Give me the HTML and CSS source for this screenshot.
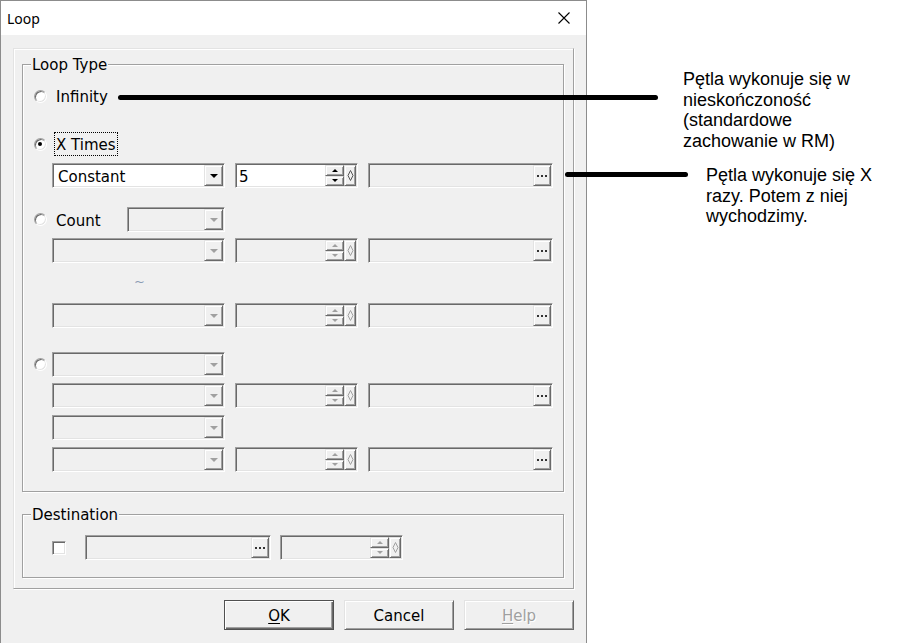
FILE: index.html
```html
<!DOCTYPE html>
<html lang="pl">
<head>
    <meta charset="UTF-8">
    <meta name="viewport" content="width=device-width, initial-scale=1.0">
    <title>Loop</title>
    <link rel="stylesheet" href="styles.css">
</head>
<body>
    <div class="screen">
        <div class="dialog">
            <div class="titlebar">
                <span class="title">Loop</span>
                <svg class="close" width="12" height="12" viewBox="0 0 12 12">
                    <path d="M0.5 0.5 L11.5 11.5 M11.5 0.5 L0.5 11.5" stroke="#000" stroke-width="1.1" fill="none"/>
                </svg>
            </div>

            <div class="client">
                <div class="page">
                    <!-- Loop Type -->
                    <div class="group group-loop">
                        <span class="group-title">Loop Type</span>

                        <div class="opt opt-infinity">
                            <span class="radio"></span>
                            <span class="label">Infinity</span>
                        </div>

                        <div class="opt opt-times">
                            <span class="radio checked"></span>
                            <span class="label focus">X Times</span>
                        </div>

                        <div class="row row-times">
                            <div class="field combo on">
                                <span class="text">Constant</span>
                                <span class="raised drop"><i class="arrow-down"></i></span>
                            </div>
                            <div class="field spin on">
                                <span class="text text-num">5</span>
                                <span class="spin-btns">
                                    <span class="raised"><i class="arrow-up"></i></span>
                                    <span class="raised"><i class="arrow-down small"></i></span>
                                </span>
                                <span class="raised lock">
                                    <svg width="7" height="11" viewBox="0 0 7 11"><polygon points="3.5,0.5 6,5.5 3.5,10.5 1,5.5" fill="none" stroke="#555" stroke-width="1"/></svg>
                                </span>
                            </div>
                            <div class="field browse">
                                <span class="text"></span>
                                <span class="raised dots">
                                    <svg width="10" height="2" viewBox="0 0 10 2"><rect x="0" y="0" width="2" height="2" fill="#333"/><rect x="4" y="0" width="2" height="2" fill="#333"/><rect x="8" y="0" width="2" height="2" fill="#333"/></svg>
                                </span>
                            </div>
                        </div>

                        <div class="opt opt-count">
                            <span class="radio"></span>
                            <span class="label label-count">Count</span>
                            <div class="field combo combo-small">
                                <span class="text"></span>
                                <span class="raised drop"><i class="arrow-down off"></i></span>
                            </div>
                        </div>

                        <div class="row row-count">
                            <div class="field combo">
                                <span class="text"></span>
                                <span class="raised drop"><i class="arrow-down off"></i></span>
                            </div>
                            <div class="field spin">
                                <span class="text"></span>
                                <span class="spin-btns">
                                    <span class="raised"><i class="arrow-up off"></i></span>
                                    <span class="raised"><i class="arrow-down small off"></i></span>
                                </span>
                                <span class="raised lock">
                                    <svg width="7" height="11" viewBox="0 0 7 11"><polygon points="3.5,0.5 6,5.5 3.5,10.5 1,5.5" fill="none" stroke="#a0a0a0" stroke-width="1"/></svg>
                                </span>
                            </div>
                            <div class="field browse">
                                <span class="text"></span>
                                <span class="raised dots">
                                    <svg width="10" height="2" viewBox="0 0 10 2"><rect x="0" y="0" width="2" height="2" fill="#333"/><rect x="4" y="0" width="2" height="2" fill="#333"/><rect x="8" y="0" width="2" height="2" fill="#333"/></svg>
                                </span>
                            </div>
                        </div>

                        <div class="tilde">~</div>

                        <div class="row row-count-end">
                            <div class="field combo">
                                <span class="text"></span>
                                <span class="raised drop"><i class="arrow-down off"></i></span>
                            </div>
                            <div class="field spin">
                                <span class="text"></span>
                                <span class="spin-btns">
                                    <span class="raised"><i class="arrow-up off"></i></span>
                                    <span class="raised"><i class="arrow-down small off"></i></span>
                                </span>
                                <span class="raised lock">
                                    <svg width="7" height="11" viewBox="0 0 7 11"><polygon points="3.5,0.5 6,5.5 3.5,10.5 1,5.5" fill="none" stroke="#a0a0a0" stroke-width="1"/></svg>
                                </span>
                            </div>
                            <div class="field browse">
                                <span class="text"></span>
                                <span class="raised dots">
                                    <svg width="10" height="2" viewBox="0 0 10 2"><rect x="0" y="0" width="2" height="2" fill="#333"/><rect x="4" y="0" width="2" height="2" fill="#333"/><rect x="8" y="0" width="2" height="2" fill="#333"/></svg>
                                </span>
                            </div>
                        </div>

                        <div class="opt opt-custom">
                            <span class="radio"></span>
                            <div class="field combo">
                                <span class="text"></span>
                                <span class="raised drop"><i class="arrow-down off"></i></span>
                            </div>
                        </div>

                        <div class="row row-a">
                            <div class="field combo">
                                <span class="text"></span>
                                <span class="raised drop"><i class="arrow-down off"></i></span>
                            </div>
                            <div class="field spin">
                                <span class="text"></span>
                                <span class="spin-btns">
                                    <span class="raised"><i class="arrow-up off"></i></span>
                                    <span class="raised"><i class="arrow-down small off"></i></span>
                                </span>
                                <span class="raised lock">
                                    <svg width="7" height="11" viewBox="0 0 7 11"><polygon points="3.5,0.5 6,5.5 3.5,10.5 1,5.5" fill="none" stroke="#a0a0a0" stroke-width="1"/></svg>
                                </span>
                            </div>
                            <div class="field browse">
                                <span class="text"></span>
                                <span class="raised dots">
                                    <svg width="10" height="2" viewBox="0 0 10 2"><rect x="0" y="0" width="2" height="2" fill="#333"/><rect x="4" y="0" width="2" height="2" fill="#333"/><rect x="8" y="0" width="2" height="2" fill="#333"/></svg>
                                </span>
                            </div>
                        </div>

                        <div class="row row-b">
                            <div class="field combo">
                                <span class="text"></span>
                                <span class="raised drop"><i class="arrow-down off"></i></span>
                            </div>
                        </div>

                        <div class="row row-b">
                            <div class="field combo">
                                <span class="text"></span>
                                <span class="raised drop"><i class="arrow-down off"></i></span>
                            </div>
                            <div class="field spin">
                                <span class="text"></span>
                                <span class="spin-btns">
                                    <span class="raised"><i class="arrow-up off"></i></span>
                                    <span class="raised"><i class="arrow-down small off"></i></span>
                                </span>
                                <span class="raised lock">
                                    <svg width="7" height="11" viewBox="0 0 7 11"><polygon points="3.5,0.5 6,5.5 3.5,10.5 1,5.5" fill="none" stroke="#a0a0a0" stroke-width="1"/></svg>
                                </span>
                            </div>
                            <div class="field browse">
                                <span class="text"></span>
                                <span class="raised dots">
                                    <svg width="10" height="2" viewBox="0 0 10 2"><rect x="0" y="0" width="2" height="2" fill="#333"/><rect x="4" y="0" width="2" height="2" fill="#333"/><rect x="8" y="0" width="2" height="2" fill="#333"/></svg>
                                </span>
                            </div>
                        </div>
                    </div>

                    <!-- Destination -->
                    <div class="group group-dest">
                        <span class="group-title">Destination</span>
                        <div class="dest-row">
                            <span class="check"></span>
                            <div class="field browse browse-dest">
                                <span class="text"></span>
                                <span class="raised dots">
                                    <svg width="10" height="2" viewBox="0 0 10 2"><rect x="0" y="0" width="2" height="2" fill="#333"/><rect x="4" y="0" width="2" height="2" fill="#333"/><rect x="8" y="0" width="2" height="2" fill="#333"/></svg>
                                </span>
                            </div>
                            <div class="field spin">
                                <span class="text"></span>
                                <span class="spin-btns">
                                    <span class="raised"><i class="arrow-up off"></i></span>
                                    <span class="raised"><i class="arrow-down small off"></i></span>
                                </span>
                                <span class="raised lock">
                                    <svg width="7" height="11" viewBox="0 0 7 11"><polygon points="3.5,0.5 6,5.5 3.5,10.5 1,5.5" fill="none" stroke="#a0a0a0" stroke-width="1"/></svg>
                                </span>
                            </div>
                        </div>
                    </div>
                </div>

                <div class="buttons">
                    <button class="btn btn-default"><u>O</u>K</button>
                    <button class="btn">Cancel</button>
                    <button class="btn" disabled><u>H</u>elp</button>
                </div>
            </div>
        </div>

        <!-- objaśnienia -->
        <div class="callout callout-1"></div>
        <div class="callout callout-2"></div>
        <p class="note note-1">Pętla wykonuje się w<br>nieskończoność<br>(standardowe<br>zachowanie w RM)</p>
        <p class="note note-2">Pętla wykonuje się X<br>razy. Potem z niej<br>wychodzimy.</p>
    </div>
</body>
</html>
```

FILE: styles.css
```css
body, html {
    margin: 0;
    padding: 0;
    background: #fff;
    font-family: "DejaVu Sans", Verdana, sans-serif;
    font-size: 15px;
    color: #000;
}

.screen {
    position: relative;
    width: 909px;
    height: 643px;
    overflow: hidden;
}

/* okno dialogowe */
.dialog {
    width: 587px;
    height: 660px;
    box-sizing: border-box;
    border: 1px solid #8c8c8c;
    background: #f0f0f0;
}

.titlebar {
    height: 34px;
    background: #fff;
    display: flex;
    align-items: center;
    justify-content: space-between;
    padding: 0 16px 0 6px;
}

.title {
    font-family: "Noto Sans", sans-serif;
    font-size: 14px;
    color: #000;
}

.client {
    padding: 13px 12px 0;
}

.page {
    height: 541px;
    box-sizing: border-box;
    border: 1px solid;
    border-color: #e3e3e3 #a0a0a0 #a0a0a0 #e3e3e3;
    box-shadow: 1px 1px 0 #fff, inset 1px 1px 0 #fff;
    padding: 15px 9px 0 8px;
}

/* ramki grup */
.group {
    position: relative;
    box-sizing: border-box;
    border: 1px solid #a0a0a0;
    box-shadow: 1px 1px 0 #fff, inset 1px 1px 0 #fff;
}

.group-title {
    position: absolute;
    top: -9px;
    left: 8px;
    padding: 0 1px;
    line-height: 18px;
    background: #f0f0f0;
}

.group-loop {
    height: 428px;
    padding: 21px 0 0 11px;
}

.group-dest {
    height: 64px;
    margin-top: 22px;
    padding: 20px 0 0 29px;
}

/* opcje */
.opt {
    display: flex;
    align-items: center;
    height: 20px;
}

.label {
    margin-left: 9px;
    padding-top: 2px;
    line-height: 20px;
}

.label.focus {
    outline: 1px dotted #000;
    padding: 2px 1px 0;
    margin-left: 8px;
}

.label-count {
    width: 71px;
}

.radio {
    position: relative;
    width: 13px;
    height: 13px;
    box-sizing: border-box;
    border-radius: 50%;
    border: 1px solid;
    border-color: #a0a0a0 #fff #fff #a0a0a0;
    box-shadow: inset 1px 1px 0 #696969, inset -1px -1px 0 #e3e3e3;
    background: #fff;
    flex: none;
}

.radio.checked::after {
    content: "";
    position: absolute;
    left: 3px;
    top: 3px;
    width: 4px;
    height: 4px;
    border-radius: 50%;
    background: #000;
}

.opt-times {
    margin-top: 28px;
}

.opt-count {
    height: 25px;
    margin-top: 19px;
}

.opt-custom {
    height: 25px;
    margin-top: 24px;
}

.opt-custom .combo {
    margin-left: 5px;
}

.row {
    display: flex;
    gap: 10px;
    height: 25px;
    margin-left: 18px;
}

.row-times {
    margin-top: 9px;
}

.row-count {
    margin-top: 6px;
}

.row-count-end {
    margin-top: 11px;
}

.row-a {
    margin-top: 6px;
}

.row-b {
    margin-top: 7px;
}

.tilde {
    height: 20px;
    margin: 9px 0 0 100px;
    font-size: 13px;
    line-height: 20px;
    color: #8c9cb4;
}

/* pola edycyjne */
.field {
    box-sizing: border-box;
    height: 25px;
    display: flex;
    padding: 1px;
    border: 1px solid;
    border-color: #a0a0a0 #fff #fff #a0a0a0;
    box-shadow: inset 1px 1px 0 #696969, inset -1px -1px 0 #e3e3e3;
    background: #f0f0f0;
}

.field.on {
    background: #fff;
}

.field .text {
    flex: 1;
    padding: 2px 0 0 4px;
    line-height: 20px;
    white-space: nowrap;
}

.field .text-num {
    padding-left: 2px;
}

.combo {
    width: 173px;
}

.combo-small {
    width: 98px;
}

.spin {
    width: 123px;
}

.browse {
    width: 185px;
}

.browse-dest {
    width: 186px;
    margin-right: 9px;
}

.raised {
    box-sizing: border-box;
    display: flex;
    align-items: center;
    justify-content: center;
    background: #f0f0f0;
    border: 1px solid;
    border-color: #e3e3e3 #696969 #696969 #e3e3e3;
    box-shadow: inset 1px 1px 0 #fff, inset -1px -1px 0 #a0a0a0;
}

.drop {
    width: 19px;
}

.dots {
    width: 18px;
    align-items: flex-end;
    padding-bottom: 8px;
}

.spin-btns {
    width: 19px;
    display: flex;
    flex-direction: column;
}

.spin-btns .raised {
    flex: 1;
}

.lock {
    width: 12px;
}

.arrow-down {
    width: 0;
    height: 0;
    border-left: 4px solid transparent;
    border-right: 4px solid transparent;
    border-top: 4px solid #000;
}

.arrow-down.small {
    border-left-width: 3px;
    border-right-width: 3px;
    border-top-width: 3px;
}

.arrow-up {
    width: 0;
    height: 0;
    border-left: 3px solid transparent;
    border-right: 3px solid transparent;
    border-bottom: 3px solid #000;
}

.arrow-down.off {
    border-top-color: #a0a0a0;
}

.arrow-up.off {
    border-bottom-color: #a0a0a0;
}

/* destination */
.dest-row {
    display: flex;
    align-items: center;
    height: 25px;
}

.check {
    width: 14px;
    height: 14px;
    box-sizing: border-box;
    margin-right: 19px;
    border: 1px solid;
    border-color: #a0a0a0 #fff #fff #a0a0a0;
    box-shadow: inset 1px 1px 0 #696969, inset -1px -1px 0 #e3e3e3;
    background: #fff;
}

/* przyciski */
.buttons {
    display: flex;
    justify-content: flex-end;
    gap: 10px;
    margin-top: 11px;
}

.btn {
    width: 110px;
    height: 30px;
    padding: 2px 0 0;
    font-family: "DejaVu Sans", Verdana, sans-serif;
    font-size: 15px;
    color: #000;
    background: #f0f0f0;
    border: 1px solid;
    border-color: #e3e3e3 #696969 #696969 #e3e3e3;
    box-shadow: inset 1px 1px 0 #fff, inset -1px -1px 0 #a0a0a0;
}

.btn-default {
    border-color: #505050;
    box-shadow: inset 1px 1px 0 #fff, inset -1px -1px 0 #696969, inset -2px -2px 0 #a0a0a0;
}

.btn:disabled {
    color: #a0a0a0;
    text-shadow: 1px 1px 0 #fff;
}

.btn u {
    text-decoration-thickness: 1px;
    text-underline-offset: 2px;
}

/* objaśnienia */
.callout {
    position: absolute;
    height: 5px;
    background: #000;
    border-radius: 3px;
}

.callout-1 {
    left: 118px;
    top: 95px;
    width: 540px;
}

.callout-2 {
    left: 565px;
    top: 172px;
    width: 123px;
}

.note {
    position: absolute;
    margin: 0;
    font-family: "Liberation Sans", Arial, sans-serif;
    font-size: 18px;
    line-height: 20.5px;
    color: #000;
}

.note-1 {
    left: 683px;
    top: 69px;
}

.note-2 {
    left: 706px;
    top: 165px;
}
```
